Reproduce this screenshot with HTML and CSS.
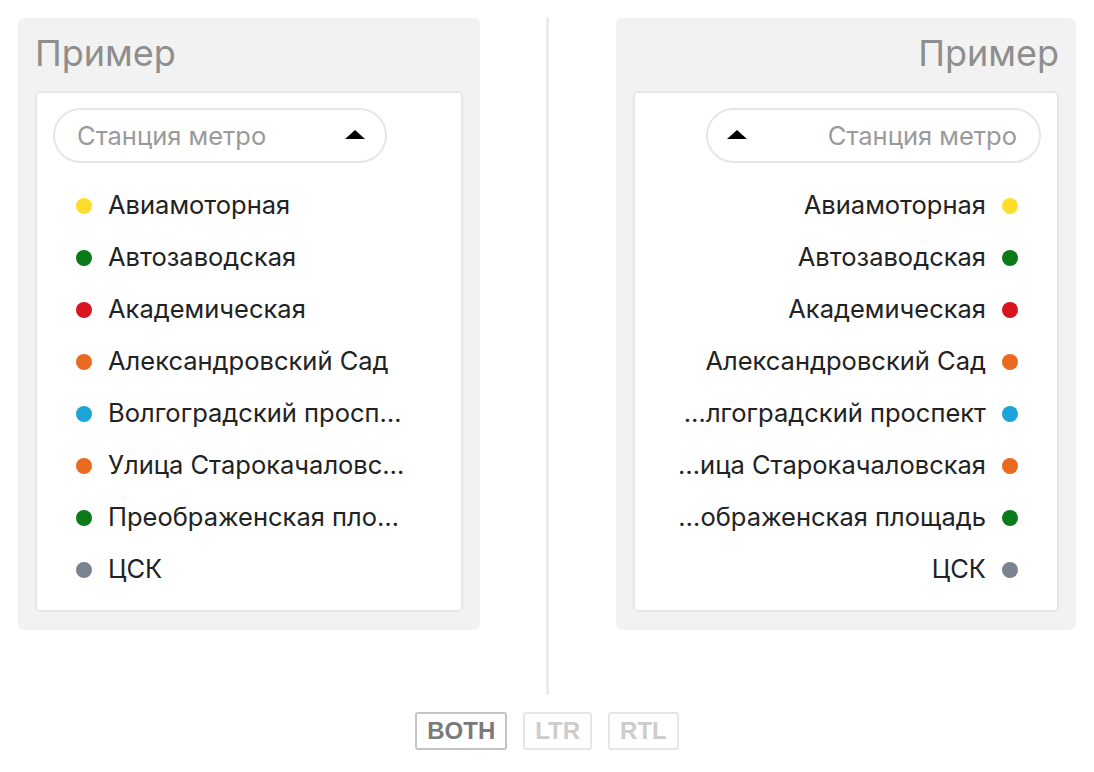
FILE: index.html
```html
<!DOCTYPE html>
<html lang="ru">
<head>
<meta charset="utf-8">
<title>Пример</title>
<link rel="stylesheet" href="styles.css">
</head>
<body>
<div class="page">
  <div class="columns">
    <section class="panel">
      <h2 class="panel-title">Пример</h2>
      <div class="card">
        <div class="select">
          <span class="select-placeholder">Станция метро</span>
          <span class="caret"></span>
        </div>
        <ul class="stations">
          <li class="station"><span class="dot yellow"></span><span class="name">Авиамоторная</span></li>
          <li class="station"><span class="dot green"></span><span class="name">Автозаводская</span></li>
          <li class="station"><span class="dot red"></span><span class="name">Академическая</span></li>
          <li class="station"><span class="dot orange"></span><span class="name">Александровский Сад</span></li>
          <li class="station"><span class="dot blue"></span><span class="name">Волгоградский проспект</span></li>
          <li class="station"><span class="dot orange"></span><span class="name">Улица Старокачаловская</span></li>
          <li class="station"><span class="dot green"></span><span class="name">Преображенская площадь</span></li>
          <li class="station"><span class="dot gray"></span><span class="name">ЦСК</span></li>
        </ul>
      </div>
    </section>
    <div class="divider"></div>
    <section class="panel panel-rtl" dir="rtl">
      <h2 class="panel-title">Пример</h2>
      <div class="card">
        <div class="select">
          <span class="select-placeholder">Станция метро</span>
          <span class="caret"></span>
        </div>
        <ul class="stations">
          <li class="station"><span class="dot yellow"></span><span class="name">Авиамоторная</span></li>
          <li class="station"><span class="dot green"></span><span class="name">Автозаводская</span></li>
          <li class="station"><span class="dot red"></span><span class="name">Академическая</span></li>
          <li class="station"><span class="dot orange"></span><span class="name">Александровский Сад</span></li>
          <li class="station"><span class="dot blue"></span><span class="name">Волгоградский проспект</span></li>
          <li class="station"><span class="dot orange"></span><span class="name">Улица Старокачаловская</span></li>
          <li class="station"><span class="dot green"></span><span class="name">Преображенская площадь</span></li>
          <li class="station"><span class="dot gray"></span><span class="name">ЦСК</span></li>
        </ul>
      </div>
    </section>
  </div>
  <div class="modes">
    <button class="mode mode-active">BOTH</button>
    <button class="mode">LTR</button>
    <button class="mode">RTL</button>
  </div>
</div>
</body>
</html>
```
FILE: styles.css
```css
* { box-sizing: border-box; }
html, body { margin: 0; padding: 0; background: #ffffff; }
body { font-family: Inter, "Noto Sans", "Liberation Sans", sans-serif; color: #222222; }

.page { padding: 18px 18px 0 18px; }

.columns {
  display: flex;
  align-items: flex-start;
}

.panel {
  width: 462px;
  height: 612px;
  background: #f2f2f2;
  border-radius: 6px;
  padding: 15px 17px 18px 17px;
}
.panel-rtl { width: 460px; }

.panel-title {
  margin: 0;
  height: 58px;
  font-weight: 400;
  font-size: 36px;
  line-height: 40px;
  color: #8e8e8e;
}

.card {
  background: #ffffff;
  border: 2px solid #e6e6e6;
  border-radius: 5px;
  padding: 15px 16px 15px 16px;
  height: 521px;
}

.select {
  width: 334px;
  height: 55px;
  border: 2px solid #e6e6e6;
  border-radius: 28px;
  display: flex;
  align-items: center;
  justify-content: space-between;
  padding: 0 20px 0 22px;
}
.panel-rtl .select { width: 335px; padding: 0 22px 0 19px; }

.select-placeholder {
  font-size: 25.5px;
  color: #9a9a9a;
}

.caret {
  width: 0;
  height: 0;
  border-left: 10px solid transparent;
  border-right: 10px solid transparent;
  border-bottom: 9px solid #000000;
  margin-top: -2px;
}

.stations {
  list-style: none;
  margin: 15px 0 0 0;
  padding: 0 0 0 23px;
}
.panel-rtl .stations { padding: 0 23px 0 0; }

.station {
  height: 52px;
  display: flex;
  align-items: center;
  gap: 16px;
}

.dot {
  flex: none;
  width: 16px;
  height: 16px;
  border-radius: 50%;
  margin-top: 3px;
}
.yellow { background: #ffdd2d; }
.green { background: #0b7a18; }
.red { background: #d8141e; }
.orange { background: #ea6a22; }
.blue { background: #1ba5d8; }
.gray { background: #7b8391; }

.name {
  font-size: 25.5px;
  white-space: nowrap;
  overflow: hidden;
  text-overflow: ellipsis;
  max-width: 300px;
}
.panel-rtl .name { max-width: 312px; }

.divider {
  width: 3px;
  height: 677px;
  background: #ebebeb;
  margin: 0 67px 0 66px;
}

.modes {
  display: flex;
  justify-content: center;
  gap: 16px;
  margin-top: 17px;
}

.mode {
  font-family: "Liberation Sans", Arial, sans-serif;
  font-weight: 700;
  font-size: 24px;
  line-height: 1;
  height: 38px;
  padding: 0 10px;
  background: #ffffff;
  border: 2px solid #e6e6e6;
  border-radius: 3px;
  color: #cccccc;
}
.mode-active {
  border-color: #c4c4c4;
  color: #7a7a7a;
}
```
